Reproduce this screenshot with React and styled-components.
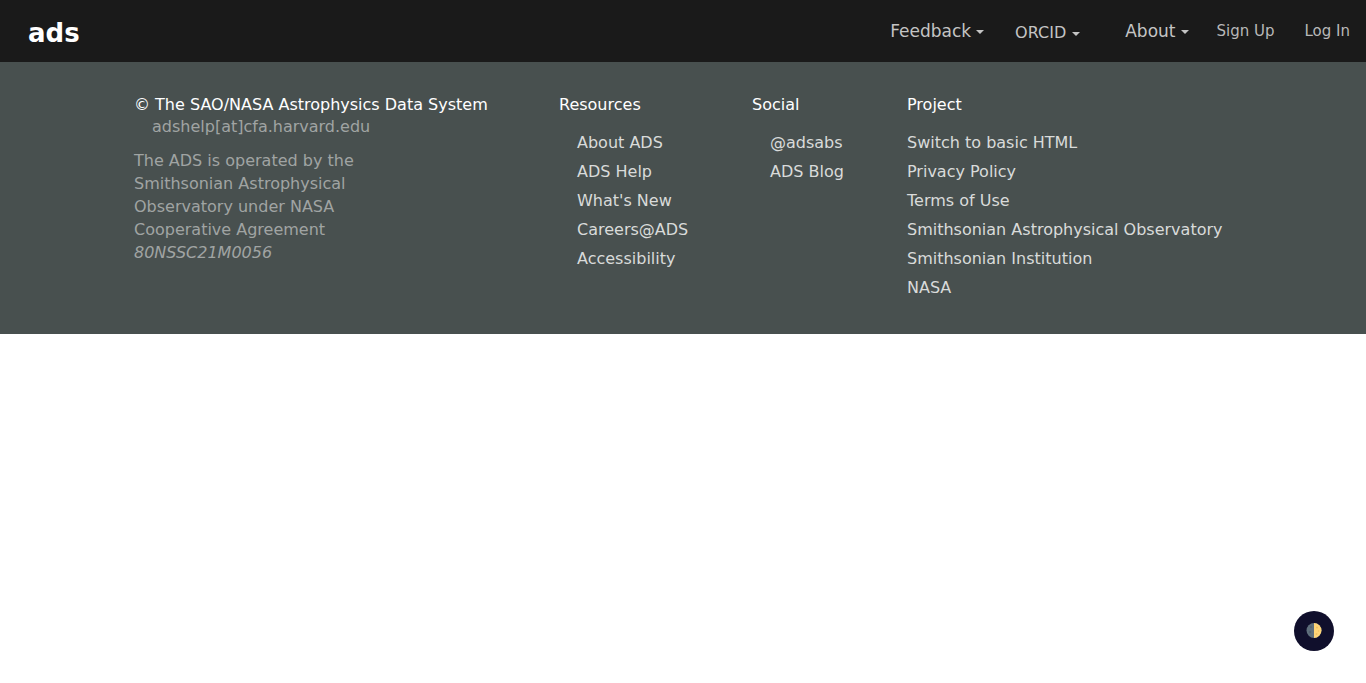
import React from "react";
import styled, { createGlobalStyle } from "styled-components";

const Global = createGlobalStyle`
  * { box-sizing: border-box; }
  body { margin: 0; background: #fff; font-family: "DejaVu Sans", sans-serif; font-size: 16px; }
`;

const Navbar = styled.header`
  display: flex;
  justify-content: space-between;
  background: #1a1a1a;
`;
const Brand = styled.a`
  padding: 19px 28px 14px;
  color: #fff;
  font-size: 26px;
  line-height: 29px;
  font-weight: 700;
  text-decoration: none;
`;
const Nav = styled.nav`
  display: flex;
  align-items: flex-start;
  padding: 20px 16px 0 0;
`;
const MenuButton = styled.button`
  display: flex;
  align-items: center;
  gap: ${(p) => (p.$small ? 6 : 5)}px;
  margin: ${(p) => (p.$small ? "2px 45px 0 0" : "0 31px 0 0")};
  padding: 0;
  border: 0;
  background: none;
  color: #c4c4c4;
  font-family: inherit;
  font-size: ${(p) => (p.$small ? 16 : 17)}px;
  line-height: 22px;
  &:last-of-type { margin-right: 28px; }
  &::after {
    content: "";
    margin-top: 1px;
    border: 4px solid transparent;
    border-top-color: currentColor;
    border-bottom: 0;
  }
`;
const NavLink = styled.a`
  color: #b8b8b8;
  font-size: 15px;
  line-height: 22px;
  text-decoration: none;
  & + & { margin-left: 30px; }
`;
const Footer = styled.footer`
  display: grid;
  grid-template-columns: 365px 133px 95px 325px;
  justify-content: center;
  gap: 60px;
  padding: 31px 30px 32px;
  background: #48504f;
  line-height: 23px;
`;
const Column = styled.section``;
const Title = styled.h2`
  margin: 0;
  color: #fff;
  font-size: 16px;
  font-weight: 400;
`;
const Mail = styled.a`
  display: block;
  padding-left: 18px;
  color: #a0a4a3;
  line-height: 22px;
  text-decoration: none;
`;
const Note = styled.p`
  max-width: 240px;
  margin: 11px 0 0;
  color: #a0a4a3;
`;
const LinkList = styled.ul`
  margin: 12px 0 0;
  padding: 0 0 0 ${(p) => (p.$indent ? 18 : 0)}px;
  list-style: none;
  line-height: 29px;
`;
const FooterLink = styled.a`
  color: #d9dbda;
  text-decoration: none;
`;
const ThemeButton = styled.button`
  position: fixed;
  right: 32px;
  bottom: 32px;
  display: grid;
  place-items: center;
  width: 40px;
  height: 40px;
  padding: 0;
  border: 0;
  border-radius: 50%;
  background: #100f2c;
`;

const columns = [
  { title: "Resources", indent: true, links: ["About ADS", "ADS Help", "What's New", "Careers@ADS", "Accessibility"] },
  { title: "Social", indent: true, links: ["@adsabs", "ADS Blog"] },
  { title: "Project", links: ["Switch to basic HTML", "Privacy Policy", "Terms of Use", "Smithsonian Astrophysical Observatory", "Smithsonian Institution", "NASA"] },
];

export default function App() {
  return (
    <>
      <Global />
      <Navbar>
        <Brand href="#">ads</Brand>
        <Nav>
          <MenuButton>Feedback</MenuButton>
          <MenuButton $small>ORCID</MenuButton>
          <MenuButton>About</MenuButton>
          <NavLink href="#">Sign Up</NavLink>
          <NavLink href="#">Log In</NavLink>
        </Nav>
      </Navbar>
      <Footer>
        <Column>
          <Title>© The SAO/NASA Astrophysics Data System</Title>
          <Mail href="#">adshelp[at]cfa.harvard.edu</Mail>
          <Note>
            The ADS is operated by the Smithsonian Astrophysical Observatory under NASA Cooperative Agreement <em>80NSSC21M0056</em>
          </Note>
        </Column>
        {columns.map((c) => (
          <Column key={c.title}>
            <Title>{c.title}</Title>
            <LinkList $indent={c.indent}>
              {c.links.map((l) => (
                <li key={l}><FooterLink href="#">{l}</FooterLink></li>
              ))}
            </LinkList>
          </Column>
        ))}
      </Footer>
      <ThemeButton aria-label="Toggle dark mode">
        <svg width="16" height="16" viewBox="0 0 16 16">
          <circle cx="8" cy="7.5" r="7.5" fill="#5f6f7c" />
          <path d="M8 0a7.5 7.5 0 0 1 0 15z" fill="#ffd577" />
          <g fill="#526270">
            <circle cx="5" cy="4" r="1" />
            <circle cx="4" cy="9" r="1.2" />
          </g>
          <g fill="#f2c162">
            <circle cx="11" cy="4.5" r="1" />
            <circle cx="12.5" cy="8" r=".8" />
            <circle cx="10.5" cy="11" r="1" />
          </g>
        </svg>
      </ThemeButton>
    </>
  );
}
